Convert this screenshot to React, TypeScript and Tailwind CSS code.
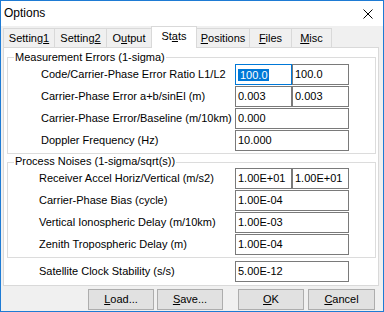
import React from 'react'

interface Row {
  label: string
  values: string[]
  focused?: boolean
}

const measurementRows: Row[] = [
  { label: 'Code/Carrier-Phase Error Ratio L1/L2', values: ['100.0', '100.0'], focused: true },
  { label: 'Carrier-Phase Error a+b/sinEl (m)', values: ['0.003', '0.003'] },
  { label: 'Carrier-Phase Error/Baseline (m/10km)', values: ['0.000'] },
  { label: 'Doppler Frequency (Hz)', values: ['10.000'] },
]

const noiseRows: Row[] = [
  { label: 'Receiver Accel Horiz/Vertical (m/s2)', values: ['1.00E+01', '1.00E+01'] },
  { label: 'Carrier-Phase Bias (cycle)', values: ['1.00E-04'] },
  { label: 'Vertical Ionospheric Delay (m/10km)', values: ['1.00E-03'] },
  { label: 'Zenith Tropospheric Delay (m)', values: ['1.00E-04'] },
]

// tab label split around the underlined access key
const tabs = [
  { pre: 'Setting', key: '1', post: '', w: 'w-[52px]' },
  { pre: 'Setting', key: '2', post: '', w: 'w-[53px]' },
  { pre: 'O', key: 'u', post: 'tput', w: 'w-[46px]' },
  { pre: 'St', key: 'a', post: 'ts', w: 'w-[46px]', active: true },
  { pre: '', key: 'P', post: 'ositions', w: 'w-[54px]' },
  { pre: '', key: 'F', post: 'iles', w: 'w-[43px]' },
  { pre: '', key: 'M', post: 'isc', w: 'w-[41px]' },
]

function Field({ value, wide, focused }: { value: string; wide: boolean; focused?: boolean }) {
  return (
    <div
      className={`h-[21px] ${wide ? 'w-[114px]' : 'w-[57px]'} flex items-center bg-white pl-[2px] border ${
        focused ? 'border-[#0078d7]' : 'border-[#7a7a7a]'
      }`}
    >
      {focused ? (
        <span className="bg-[#0078d7] text-white leading-[12px] pl-[2px] pr-[1px]">{value}</span>
      ) : (
        <span className="leading-[13px]">{value}</span>
      )}
    </div>
  )
}

function FieldRow({ row, labelPad }: { row: Row; labelPad: string }) {
  return (
    <div className="h-[21px] flex items-center">
      <div className={`flex-1 ${labelPad} leading-[13px] whitespace-nowrap`}>{row.label}</div>
      <div className="flex w-[114px]">
        {row.values.map((v, i) => (
          <Field key={i} value={v} wide={row.values.length === 1} focused={row.focused && i === 0} />
        ))}
      </div>
    </div>
  )
}

function GroupBox({ title, rows, top, labelPad, className }: { title: string; rows: Row[]; top: string; labelPad: string; className: string }) {
  return (
    <div className={`relative ml-[3px] mr-[2px] border border-[#dcdcdc] pr-[26px] pb-[2px] ${className}`}>
      <span className={`absolute left-[6px] ${top} bg-white pl-[1px] pr-[1px] leading-[13px] whitespace-nowrap`}>{title}</span>
      <div className="flex flex-col gap-[1px]">
        {rows.map((r) => (
          <FieldRow key={r.label} row={r} labelPad={labelPad} />
        ))}
      </div>
    </div>
  )
}

function DialogButton({ pre, k, post, w, className = '' }: { pre: string; k: string; post: string; w: string; className?: string }) {
  return (
    <div className={`h-[21px] ${w} flex items-center justify-center bg-[#e1e1e1] border border-[#adadad] leading-[13px] ${className}`}>
      <span>
        {pre}
        <u>{k}</u>
        {post}
      </span>
    </div>
  )
}

export default function App() {
  return (
    <div className="w-[384px] h-[312px] border border-[#1e7bd4] flex flex-col bg-[#f0f0f0] text-black text-[11px] font-['Liberation_Sans',Arial,sans-serif] overflow-hidden">
      {/* Title bar */}
      <div className="h-[25px] bg-white flex items-start justify-between pl-[3px] pr-[10px]">
        <span className="pt-[6px] text-[12px] leading-[12px]">Options</span>
        <svg width="10" height="10" viewBox="0 0 10 10" className="mt-[8px]">
          <path d="M0.5 0.5 L9.5 9.5 M9.5 0.5 L0.5 9.5" stroke="#000" strokeWidth="1" fill="none" />
        </svg>
      </div>

      <div className="flex flex-col pl-[2px] pr-[5px]">
        {/* Tabs */}
        <div className="h-[21px] flex items-end">
          {tabs.map((t, i) =>
            t.active ? (
              <div
                key={i}
                className={`${t.w} h-[22px] self-start relative z-10 -ml-px bg-white border border-b-0 border-[#d9d9d9] flex justify-center pt-[3px] leading-[13px]`}
              >
                <span>
                  {t.pre}
                  <u>{t.key}</u>
                  {t.post}
                </span>
              </div>
            ) : (
              <div
                key={i}
                className={`${t.w} h-[19px] ${i === 0 ? '' : '-ml-px'} bg-[#f0f0f0] border border-b-0 border-[#d9d9d9] flex justify-center pt-[3px] leading-[13px]`}
              >
                <span>
                  {t.pre}
                  <u>{t.key}</u>
                  {t.post}
                </span>
              </div>
            )
          )}
        </div>

        {/* Panel */}
        <div className="w-[376px] h-[239px] bg-white border border-[#d9d9d9] flex flex-col">
          <GroupBox
            title="Measurement Errors (1-sigma)"
            rows={measurementRows}
            top="top-[-7px]"
            labelPad="pl-[33px]"
            className="mt-[9px] pt-[6px]"
          />
          <GroupBox
            title="Process Noises (1-sigma/sqrt(s))"
            rows={noiseRows}
            top="top-[-8px]"
            labelPad="pl-[31px]"
            className="mt-[8px] pt-[5px]"
          />
          <div className="mt-[3px] pr-[29px]">
            <FieldRow row={{ label: 'Satellite Clock Stability (s/s)', values: ['5.00E-12'] }} labelPad="pl-[35px]" />
          </div>
        </div>

        {/* Buttons */}
        <div className="flex mt-[3px] pl-[85px]">
          <DialogButton pre="" k="L" post="oad..." w="w-[66px]" />
          <DialogButton pre="" k="S" post="ave..." w="w-[66px]" className="ml-[3px]" />
          <DialogButton pre="" k="O" post="K" w="w-[66px]" className="ml-[15px]" />
          <DialogButton pre="" k="C" post="ancel" w="w-[67px]" className="ml-[4px]" />
        </div>
      </div>
    </div>
  )
}
